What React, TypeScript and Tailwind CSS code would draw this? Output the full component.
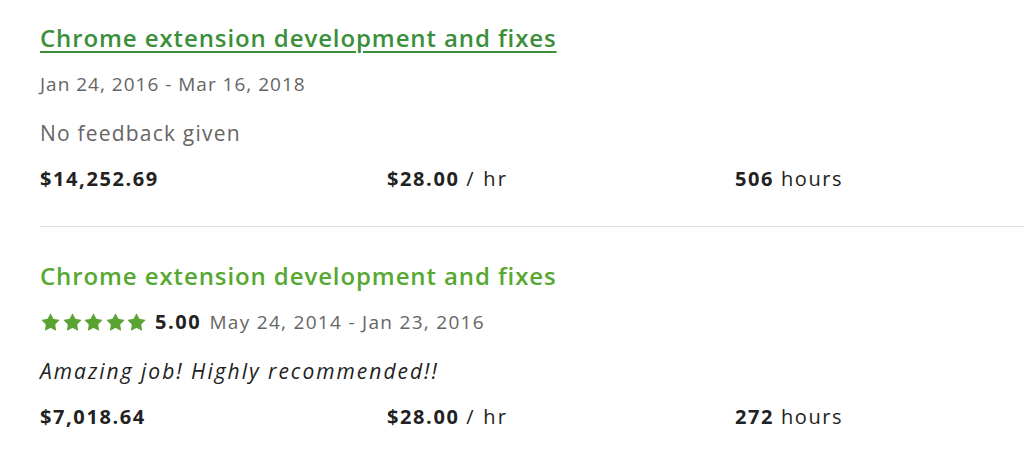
import { Star } from 'lucide-react';

type Job = {
  title: string;
  visited?: boolean;
  rating?: string;
  dates: string;
  feedback: string;
  italic?: boolean;
  earned: string;
  rate: string;
  hours: string;
};

const jobs: Job[] = [
  {
    title: 'Chrome extension development and fixes',
    visited: true,
    dates: 'Jan 24, 2016 - Mar 16, 2018',
    feedback: 'No feedback given',
    earned: '$14,252.69',
    rate: '$28.00',
    hours: '506',
  },
  {
    title: 'Chrome extension development and fixes',
    rating: '5.00',
    dates: 'May 24, 2014 - Jan 23, 2016',
    feedback: 'Amazing job! Highly recommended!!',
    italic: true,
    earned: '$7,018.64',
    rate: '$28.00',
    hours: '272',
  },
];

function Stars() {
  return (
    <span className="mr-[8px] flex items-center gap-[0.5px]">
      {[0, 1, 2, 3, 4].map((i) => (
        <Star key={i} size={21} strokeWidth={0} className="fill-[#5aa333]" />
      ))}
    </span>
  );
}

export default function App() {
  return (
    <div className="min-h-[462px] bg-white pl-10 font-['Open_Sans',sans-serif] text-[#222]">
      {jobs.map((j, idx) => (
        <div
          key={idx}
          className={`${idx === 0 ? 'pt-[23px] pb-[35px] border-b border-[#e0e0e0]' : 'pt-[34px]'}`}
        >
          <a
            href="#"
            className={`block h-[30px] text-[24px] font-semibold leading-[30px] tracking-[0.9px] ${
              j.visited
                ? 'text-[#3b8f3b] underline decoration-[1.5px] underline-offset-[4px]'
                : 'text-[#56a832]'
            }`}
          >
            {j.title}
          </a>
          <div className="mt-[19px] flex h-[24px] items-center text-[19px] leading-[24px] tracking-[1px] text-[#656565]">
            {j.rating && (
              <>
                <Stars />
                <span className="mr-[8px] text-[20px] font-bold tracking-[1.6px] text-[#222]">
                  {j.rating}
                </span>
              </>
            )}
            <span className={j.rating ? 'tracking-[1.3px]' : ''}>{j.dates}</span>
          </div>
          <p
            className={`mt-[24px] h-[26px] text-[21px] leading-[26px] ${
              j.italic ? 'italic tracking-[2px] text-[#222]' : 'tracking-[1.2px] text-[#656565]'
            }`}
          >
            {j.feedback}
          </p>
          <div className="mt-[21px] grid h-[24px] grid-cols-[347px_348px_1fr] text-[20px] leading-[24px] tracking-[1.6px]">
            <span className="font-bold">{j.earned}</span>
            <span>
              <b className="font-bold">{j.rate}</b> <span className="tracking-[2.2px]">/ hr</span>
            </span>
            <span>
              <b className="font-bold">{j.hours}</b> hours
            </span>
          </div>
        </div>
      ))}
    </div>
  );
}
